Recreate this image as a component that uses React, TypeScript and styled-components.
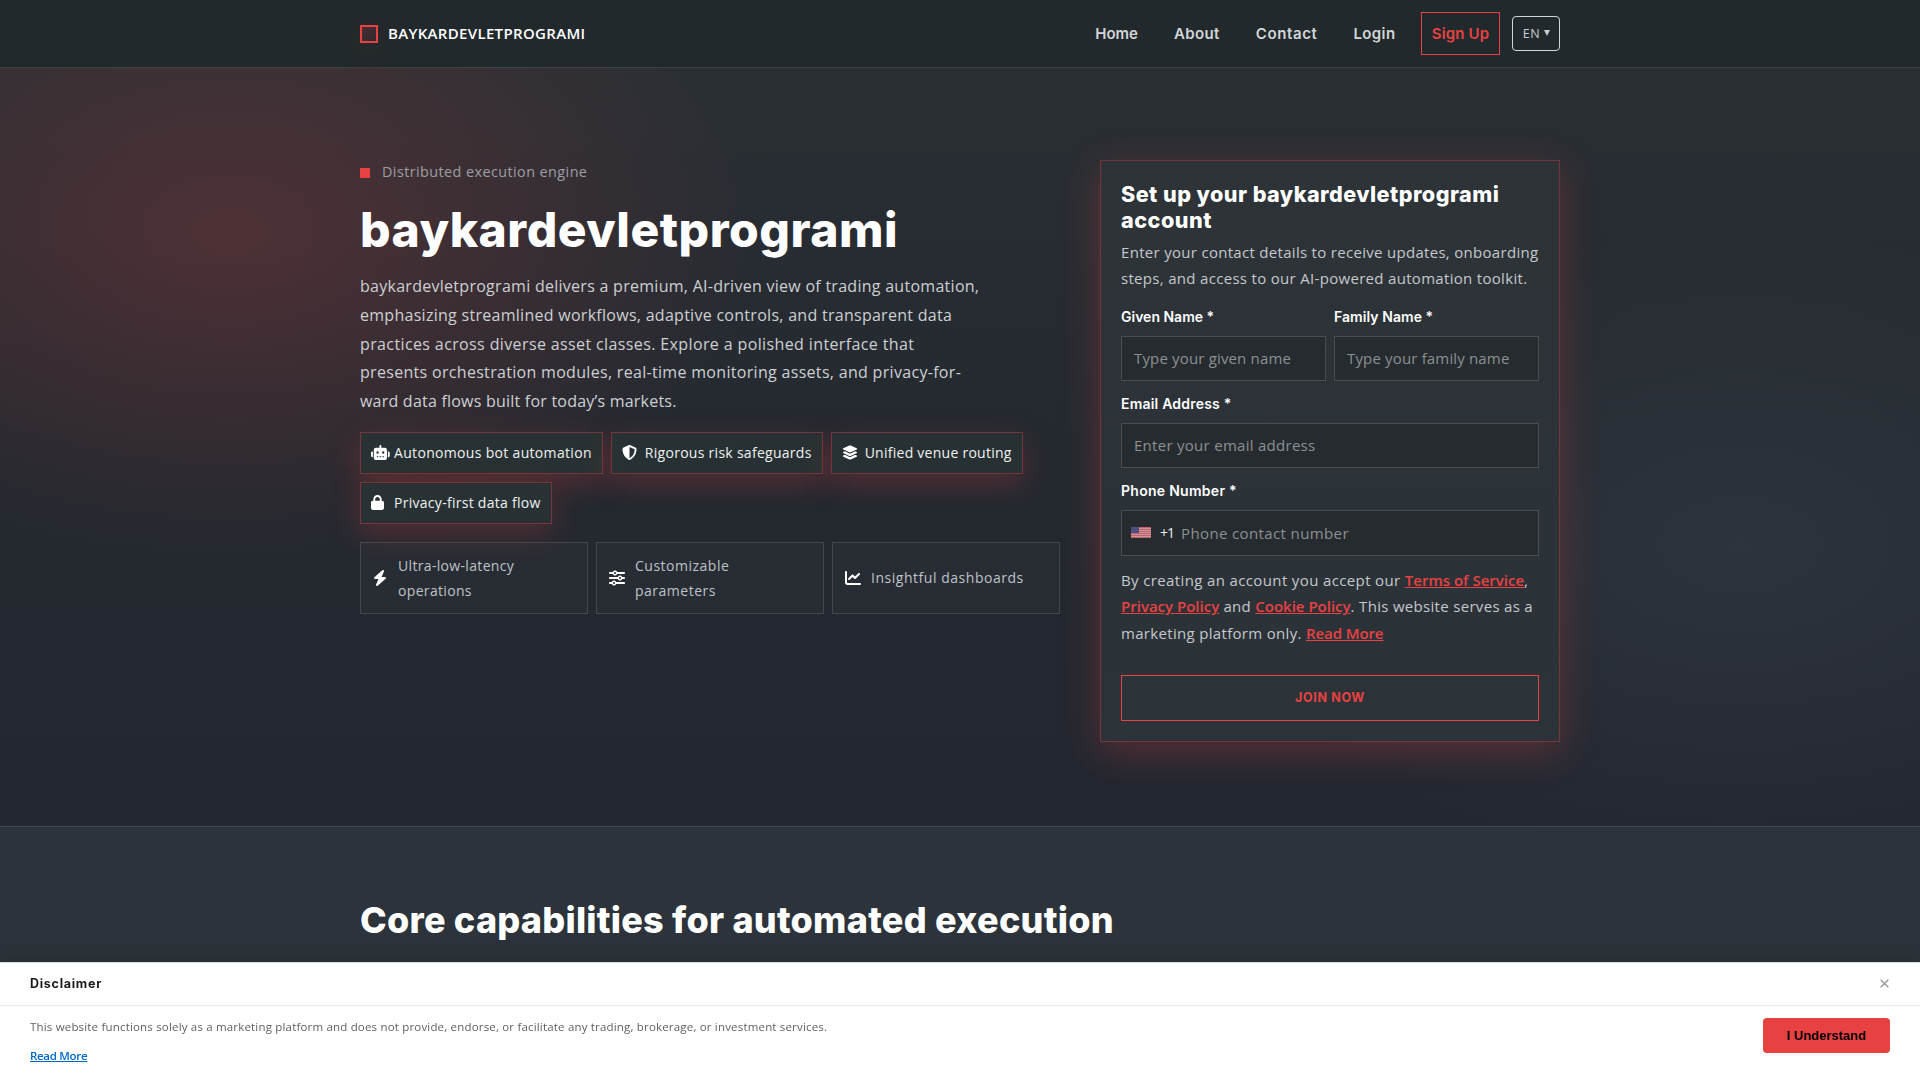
import React from "react";
import styled, { createGlobalStyle } from "styled-components";
import { FaRobot, FaShieldHalved, FaLayerGroup, FaLock, FaBolt, FaSliders, FaChartLine } from "react-icons/fa6";

const accent = "#e84142";
const display = `Inter, "Liberation Sans", sans-serif`;
const body = `"Open Sans", "Liberation Sans", sans-serif`;

const Global = createGlobalStyle`
  *, *::before, *::after { box-sizing: border-box; }
  html, body { margin: 0; background: #242830; }
  body { font-family: ${body}; color: #fff; }
`;

const Page = styled.div`
  height: 100vh;
  overflow: hidden;
  display: flex;
  flex-direction: column;
`;

const Container = styled.div`
  width: 1200px;
  margin: 0 auto;
`;

const Tracked = styled.span<{ $ls?: number }>`
  letter-spacing: ${(p) => p.$ls ?? 0}px;
  white-space: nowrap;
`;

/* Header */
const Header = styled.header`
  flex: none;
  height: 68px;
  background: #22292c;
  border-bottom: 1px solid #3c4144;
`;
const HeaderRow = styled(Container)`
  height: 67px;
  display: flex;
  align-items: center;
  justify-content: space-between;
`;
const Brand = styled.a`
  display: flex;
  align-items: center;
  gap: 10px;
  font-size: 15px;
  line-height: 20px;
  font-weight: 600;
  letter-spacing: 0.33px;
`;
const BrandName = styled.span`
  padding-bottom: 2px;
`;
const BrandMark = styled.span`
  width: 18px;
  height: 18px;
  border: 2px solid ${accent};
  background: linear-gradient(135deg, #4b2b30, #2c2a2f);
  box-shadow: 0 6px 30px rgba(232, 65, 66, 0.1);
`;
const Nav = styled.nav`
  display: flex;
  align-items: center;
  font-family: ${display};
  font-size: 15px;
  font-weight: 600;
  color: #d3d6d8;
`;
const NavLink = styled(Tracked)`
  margin-right: 36px;
  padding-bottom: 1px;
`;
const SignUp = styled.a`
  height: 43px;
  width: 79px;
  margin-left: -10.5px;
  padding-bottom: 1px;
  display: flex;
  align-items: center;
  justify-content: center;
  border: 1px solid ${accent};
  color: ${accent};
  letter-spacing: 0.15px;
`;
const Lang = styled.button`
  width: 48px;
  height: 35px;
  margin-left: 12px;
  padding: 0 0 1px 1px;
  display: flex;
  align-items: center;
  justify-content: center;
  gap: 4px;
  border: 1px solid #d3d6d8;
  border-radius: 4px;
  background: transparent;
  color: #c9cccf;
  font: 400 12.5px ${body};
  letter-spacing: 0.6px;
`;
const Caret = styled.span`
  border: 3px solid transparent;
  border-top: 6px solid #c9cccf;
  border-bottom: 0;
`;

/* Hero */
const Hero = styled.section`
  flex: none;
  height: 759px;
  padding-top: 92px;
  border-bottom: 1px solid #41464d;
  background:
    radial-gradient(530px 330px at 230px 165px, rgba(232, 65, 66, 0.2), rgba(232, 65, 66, 0) 100%),
    radial-gradient(540px 320px at 1740px 480px, rgba(140, 160, 180, 0.09), rgba(140, 160, 180, 0) 100%),
    linear-gradient(180deg, #2a2f34 0%, #242930 52%, #232730 100%);
`;
const HeroGrid = styled(Container)`
  display: grid;
  grid-template-columns: 700px 460px;
  gap: 40px;
  align-items: start;
`;
const Eyebrow = styled.div`
  height: 25px;
  display: flex;
  align-items: center;
  gap: 12px;
  font-size: 14.4px;
  letter-spacing: 0.42px;
  color: #9b9fa3;
  &::before {
    content: "";
    width: 10px;
    height: 10px;
    background: ${accent};
  }
`;
const EyebrowText = styled.span`
  padding-bottom: 2px;
`;
const HeroTitle = styled.h1`
  margin: 18px 0 16px;
  font: 800 48px/53px ${display};
  letter-spacing: 0.5px;
`;
const Lead = styled.p`
  margin: 0 0 16px;
  font-size: 16px;
  line-height: 28.8px;
  color: #cdd0d3;
`;
const Line = styled(Tracked)`
  display: block;
`;
const Chips = styled.div`
  display: flex;
  flex-wrap: wrap;
  gap: 8px;
`;
const Chip = styled.div<{ $ls: number }>`
  height: 42px;
  padding: 0 10px 1px;
  display: flex;
  align-items: center;
  gap: 8px;
  border: 1px solid #743638;
  background: rgba(40, 50, 52, 0.9);
  box-shadow: 0 10px 30px rgba(232, 65, 66, 0.25);
  font-size: 14px;
  letter-spacing: ${(p) => p.$ls}px;
  color: #f0f1f2;
`;
const ChipIcon = styled.span<{ $w: number }>`
  width: 15px;
  display: flex;
  color: #fff;
  svg { flex: none; width: ${(p) => p.$w}px; height: 15px; }
`;
const Features = styled.div`
  margin-top: 18px;
  display: grid;
  grid-template-columns: repeat(3, 1fr);
  gap: 8px;
`;
const Feature = styled.div<{ $inset: number }>`
  height: 72px;
  padding-left: ${(p) => p.$inset}px;
  display: flex;
  align-items: center;
  gap: 10px;
  border: 1px solid #43474b;
  background: rgba(255, 255, 255, 0.02);
  font-size: 14px;
  line-height: 25px;
  color: #bfc2c6;
`;
const FeatureIcon = styled.span`
  width: 16px;
  display: flex;
  justify-content: center;
  font-size: 16px;
  color: #fff;
`;

/* Form card */
const Card = styled.form`
  height: 582px;
  padding: 20px;
  border: 1px solid #743638;
  background: linear-gradient(180deg, #2d3337, #2b3238);
  box-shadow: 0 10px 36px rgba(232, 65, 66, 0.27);
`;
const CardTitle = styled.h2`
  margin: 0 0 6px;
  font: 800 21.6px/26px ${display};
`;
const CardText = styled.p`
  margin: 0 0 14px;
  font-size: 15px;
  line-height: 26px;
  color: #c5c8cc;
`;
const FieldRow = styled.div`
  display: grid;
  grid-template-columns: repeat(2, minmax(0, 1fr));
  gap: 8px;
`;
const Field = styled.label<{ $ls?: number }>`
  display: block;
  margin-bottom: 11px;
  font: 600 14px/24px ${display};
  letter-spacing: ${(p) => p.$ls ?? 0}px;
`;
const Control = styled.span<{ $tall?: boolean }>`
  height: ${(p) => (p.$tall ? 46 : 45)}px;
  margin-top: 7px;
  padding: 0 0 1px ${(p) => (p.$tall ? 9 : 12)}px;
  display: flex;
  align-items: center;
  border: 1px solid #484d50;
  background: #262b2f;
  color: #eceeef;
`;
const Input = styled.input<{ $ls?: number }>`
  flex: 1;
  min-width: 0;
  padding: 0;
  border: 0;
  outline: 0;
  background: transparent;
  font: 400 15px ${body};
  letter-spacing: ${(p) => p.$ls ?? 0.16}px;
  &::placeholder { color: #8c9092; opacity: 1; }
`;
const Flag = styled.svg`
  width: 20px;
  height: 11px;
  opacity: 0.85;
`;
const DialCode = styled.span`
  width: 21px;
  margin-left: 9px;
  font: 400 14px ${body};
  letter-spacing: -1px;
`;
const Terms = styled.p`
  margin: 11px 0 29px;
  font-size: 15px;
  line-height: 26.3px;
  color: #c5c8cc;
`;
const TermsLink = styled.a<{ $ls?: number }>`
  color: ${accent};
  font-weight: 600;
  letter-spacing: ${(p) => p.$ls ?? 0}px;
  text-decoration: underline;
`;
const Submit = styled.button`
  width: 100%;
  height: 46px;
  padding: 0;
  border: 1px solid ${accent};
  background: transparent;
  color: ${accent};
  font: 700 12.5px ${display};
  letter-spacing: 0.65px;
`;

/* Capabilities */
const Capabilities = styled.section`
  flex: 1;
  padding-top: 71px;
  background: #2c333a;
`;
const SectionTitle = styled.h2`
  margin: 0;
  font: 800 36px/44px ${display};
  letter-spacing: 0.24px;
`;

/* Disclaimer */
const Banner = styled.aside`
  position: fixed;
  inset: auto 0 0;
  height: 118px;
  background: #fff;
  border-top: 1px solid #d9dcde;
  box-shadow: 0 -4px 20px rgba(0, 0, 0, 0.15);
`;
const BannerHead = styled.div`
  height: 43px;
  padding: 0 31px 1px 30px;
  display: flex;
  align-items: center;
  justify-content: space-between;
  border-bottom: 1px solid #e9ebec;
  font: 700 12.5px ${display};
  letter-spacing: 0.72px;
  color: #1a1a1a;
`;
const CloseIcon = styled.svg`
  width: 9px;
  height: 9px;
  stroke: #999;
  stroke-width: 1.5;
`;
const BannerBody = styled.div`
  padding: 12px 30px 0;
  display: flex;
  justify-content: space-between;
  align-items: flex-start;
`;
const BannerCopy = styled.div`
  font-size: 11.5px;
  line-height: 18px;
  letter-spacing: 0.18px;
  color: #5f6163;
`;
const BannerLink = styled.a`
  display: block;
  width: fit-content;
  margin-top: 11px;
  font-weight: 600;
  letter-spacing: -0.3px;
  color: #06c;
  text-decoration: underline;
`;
const Agree = styled.button`
  width: 127px;
  height: 35px;
  border: 0;
  border-radius: 4px;
  background: ${accent};
  color: #000;
  font: 700 13px "Liberation Sans", sans-serif;
`;

const nav: [string, number][] = [["Home", 0], ["About", 0.4], ["Contact", 0.6], ["Login", 0.4]];

const lead: [string, number][] = [
  ["baykardevletprogrami delivers a premium, AI-driven view of trading automation,", 0.275],
  ["emphasizing streamlined workflows, adaptive controls, and transparent data", 0.28],
  ["practices across diverse asset classes. Explore a polished interface that", 0.38],
  ["presents orchestration modules, real-time monitoring assets, and privacy-for-", 0.31],
  ["ward data flows built for today’s markets.", 0.22],
];

const chips = [
  { icon: <FaRobot />, w: 18.75, ls: 0.32, text: "Autonomous bot automation" },
  { icon: <FaShieldHalved />, w: 15, ls: 0.28, text: "Rigorous risk safeguards" },
  { icon: <FaLayerGroup />, w: 16, ls: 0.26, text: "Unified venue routing" },
  { icon: <FaLock />, w: 13, ls: 0.28, text: "Privacy-first data flow" },
];

const features = [
  { icon: <FaBolt />, lines: ["Ultra-low-latency", "operations"], ls: 0.33, inset: 11 },
  { icon: <FaSliders />, lines: ["Customizable", "parameters"], ls: 0.5, inset: 12 },
  { icon: <FaChartLine />, lines: ["Insightful dashboards"], ls: 0.53, inset: 12 },
];

export default function App() {
  return (
    <Page>
      <Global />
      <Header>
        <HeaderRow>
          <Brand><BrandMark /><BrandName>BAYKARDEVLETPROGRAMI</BrandName></Brand>
          <Nav>
            {nav.map(([label, ls]) => <NavLink as="a" key={label} $ls={ls}>{label}</NavLink>)}
            <SignUp>Sign Up</SignUp>
            <Lang>EN<Caret /></Lang>
          </Nav>
        </HeaderRow>
      </Header>

      <Hero>
        <HeroGrid>
          <div>
            <Eyebrow><EyebrowText>Distributed execution engine</EyebrowText></Eyebrow>
            <HeroTitle>baykardevletprogrami</HeroTitle>
            <Lead>{lead.map(([text, ls]) => <Line key={text} $ls={ls}>{text}</Line>)}</Lead>
            <Chips>
              {chips.map((c) => <Chip key={c.text} $ls={c.ls}><ChipIcon $w={c.w}>{c.icon}</ChipIcon>{c.text}</Chip>)}
            </Chips>
            <Features>
              {features.map((f) => (
                <Feature key={f.lines[0]} $inset={f.inset}>
                  <FeatureIcon>{f.icon}</FeatureIcon>
                  <div>{f.lines.map((l) => <Line key={l} $ls={f.ls}>{l}</Line>)}</div>
                </Feature>
              ))}
            </Features>
          </div>

          <Card>
            <CardTitle>
              <Line $ls={0.45}>Set up your baykardevletprogrami</Line>
              <Line $ls={0.5}>account</Line>
            </CardTitle>
            <CardText>
              <Line $ls={0.3}>Enter your contact details to receive updates, onboarding</Line>
              <Line $ls={0.31}>steps, and access to our AI-powered automation toolkit.</Line>
            </CardText>
            <FieldRow>
              <Field>Given Name *<Control><Input $ls={0.16} placeholder="Type your given name" /></Control></Field>
              <Field $ls={0.06}>Family Name *<Control><Input placeholder="Type your family name" /></Control></Field>
            </FieldRow>
            <Field $ls={0.2}>Email Address *<Control><Input $ls={0.28} placeholder="Enter your email address" /></Control></Field>
            <Field $ls={0.28}>
              Phone Number *
              <Control $tall>
                <Flag viewBox="0 0 20 11" aria-hidden="true">
                  <rect width="20" height="11" fill="#f0b4ba" />
                  {[0, 1, 2, 3, 4, 5].map((i) => <rect key={i} y={i * 2} width="20" height="1.2" fill="#dc6f7a" />)}
                  <rect width="8" height="6" fill="#56568f" />
                </Flag>
                <DialCode>+1</DialCode>
                <Input $ls={0.38} placeholder="Phone contact number" />
              </Control>
            </Field>
            <Terms>
              <Line $ls={0.37}>By creating an account you accept our <TermsLink>Terms of Service</TermsLink>,</Line>
              <Line $ls={0.31}><TermsLink>Privacy Policy</TermsLink> and <TermsLink>Cookie Policy</TermsLink>. This website serves as a</Line>
              <Line $ls={0.32}>marketing platform only. <TermsLink $ls={-0.1}>Read More</TermsLink></Line>
            </Terms>
            <Submit type="button">JOIN NOW</Submit>
          </Card>
        </HeroGrid>
      </Hero>

      <Capabilities>
        <Container><SectionTitle>Core capabilities for automated execution</SectionTitle></Container>
      </Capabilities>

      <Banner>
        <BannerHead>
          Disclaimer
          <CloseIcon viewBox="0 0 9 9"><path d="M.7.7l7.6 7.6M8.3.7L.7 8.3" /></CloseIcon>
        </BannerHead>
        <BannerBody>
          <BannerCopy>
            This website functions solely as a marketing platform and does not provide, endorse, or facilitate any trading, brokerage, or investment services.
            <BannerLink>Read More</BannerLink>
          </BannerCopy>
          <Agree>I Understand</Agree>
        </BannerBody>
      </Banner>
    </Page>
  );
}
